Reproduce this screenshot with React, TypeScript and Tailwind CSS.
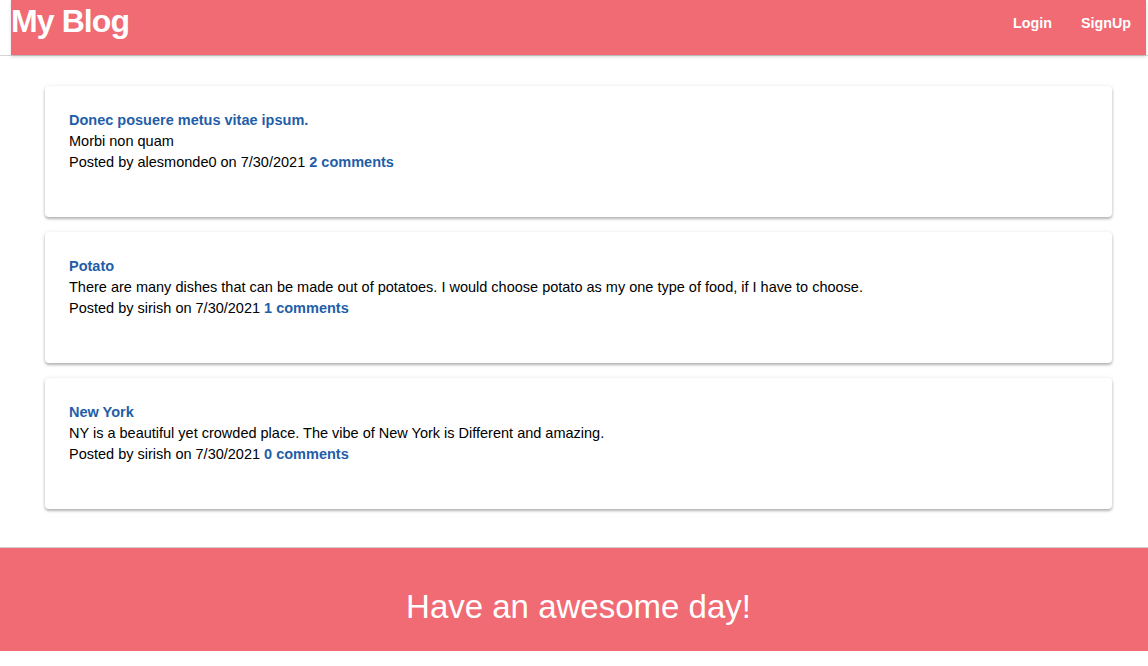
const posts = [
  {
    title: "Donec posuere metus vitae ipsum.",
    body: "Morbi non quam",
    author: "alesmonde0",
    date: "7/30/2021",
    comments: 2,
  },
  {
    title: "Potato",
    body: "There are many dishes that can be made out of potatoes. I would choose potato as my one type of food, if I have to choose.",
    author: "sirish",
    date: "7/30/2021",
    comments: 1,
  },
  {
    title: "New York",
    body: "NY is a beautiful yet crowded place. The vibe of New York is Different and amazing.",
    author: "sirish",
    date: "7/30/2021",
    comments: 0,
  },
];

export default function App() {
  return (
    <div className="min-h-[666px] bg-white font-['Liberation_Sans',Arial,sans-serif] text-black">
      {/* Header */}
      <div className="border-b border-[#d4d4d4]">
        <header className="ml-[11px] mr-[2px] h-[55px] flex items-center justify-between bg-[#f06b74] shadow-[0_2px_3px_rgba(0,0,0,0.15)]">
          <h1 className="mb-[14px] text-[32px] font-bold text-white leading-none tracking-[-0.9px]">
            My Blog
          </h1>
          <nav className="mb-[8px] flex items-center gap-[29px] pr-[15px] text-[14.3px] font-bold text-white">
            <a href="#">Login</a>
            <a href="#">SignUp</a>
          </nav>
        </header>
      </div>

      {/* Posts */}
      <main className="ml-[45px] mr-[36px] mt-[30px] flex flex-col gap-[15px]">
        {posts.map((post, i) => (
          <div
            key={i}
            className="rounded-[4px] bg-white px-[24px] pt-[24px] pb-[44px] text-[14.5px] leading-[21px] shadow-[0_2px_3px_rgba(0,0,0,0.28),0_0_4px_rgba(0,0,0,0.08)]"
          >
            <div className="font-bold text-[#1f5ea8]">{post.title}</div>
            <div>{post.body}</div>
            <div>
              Posted by {post.author} on {post.date}{" "}
              <span className="font-bold text-[#1f5ea8]">
                {post.comments} comments
              </span>
            </div>
          </div>
        ))}
      </main>

      {/* Footer */}
      <footer className="mt-[38px] h-[104px] flex items-center justify-center border-t border-[#cfcfcf] bg-[#f06b74] pt-[14px] pl-[9px]">
        <p className="text-[33px] text-white leading-none">Have an awesome day!</p>
      </footer>
    </div>
  );
}
